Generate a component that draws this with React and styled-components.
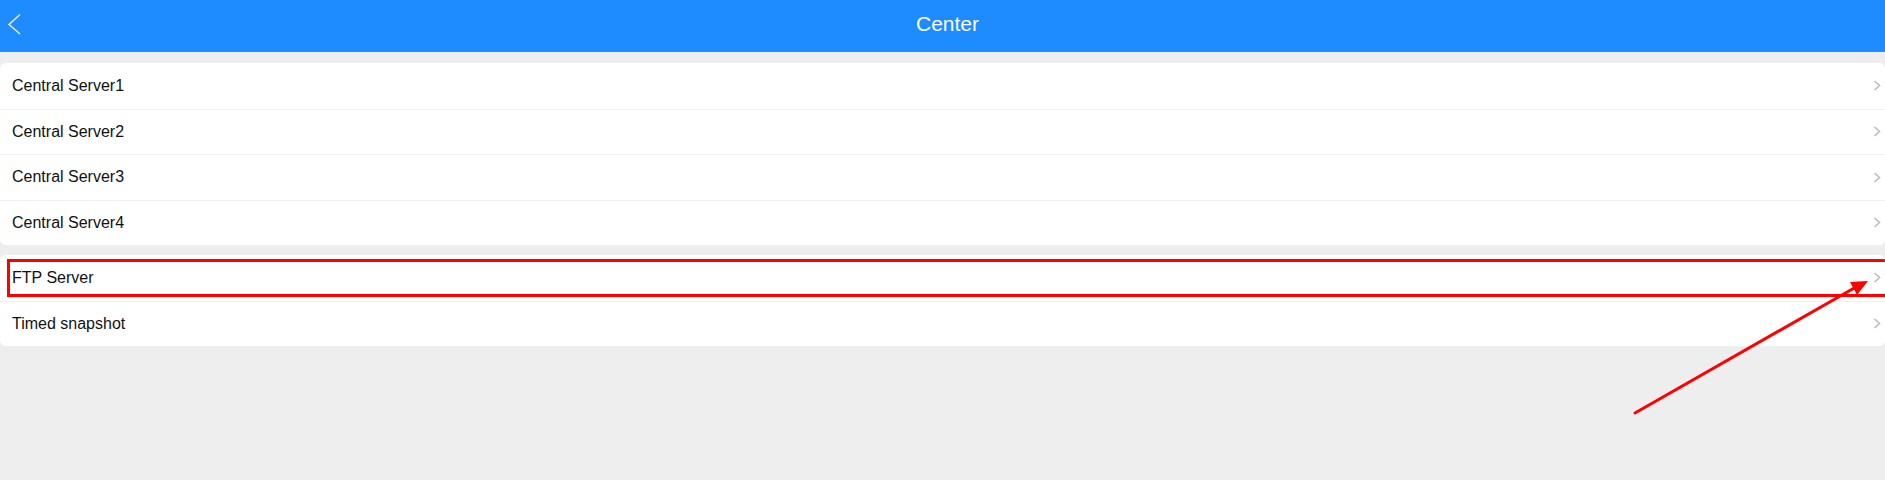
import React from 'react'
import styled, { createGlobalStyle } from 'styled-components'

const GlobalStyle = createGlobalStyle`
  html, body {
    margin: 0;
    padding: 0;
    background: #eeeeee;
    font-family: "Liberation Sans", Arial, sans-serif;
  }
`

const Page = styled.div`
  position: relative;
  width: 1885px;
  height: 480px;
  background: #eeeeee;
  overflow: hidden;
`

const Header = styled.header`
  position: relative;
  height: 52px;
  background: #1e8bff;
  display: flex;
  align-items: center;
  justify-content: center;
`

const BackButton = styled.button`
  position: absolute;
  left: 6px;
  top: 12px;
  width: 16px;
  height: 24px;
  padding: 0;
  border: 0;
  background: none;
  display: flex;
  align-items: center;
  justify-content: center;
  cursor: pointer;
`

const Title = styled.h1`
  margin: 0 0 4px 10px;
  color: #ffffff;
  font-size: 21px;
  font-weight: 400;
`

const Content = styled.main`
  display: flex;
  flex-direction: column;
  gap: 10px;
  padding-top: 11px;
`

const Card = styled.section`
  background: #ffffff;
  border-radius: 6px;
  overflow: hidden;
`

const Row = styled.div`
  position: relative;
  box-sizing: border-box;
  height: 45.5px;
  display: flex;
  align-items: center;
  justify-content: space-between;
  padding: 0 4px 0 12px;
  font-size: 16px;
  color: #111;

  & + & {
    border-top: 1px solid #f0f0f0;
  }
`

const Label = styled.span`
  line-height: 1;
`

const Chevron = styled.svg`
  width: 8px;
  height: 11px;
  flex: none;
`

const Highlight = styled.div`
  position: absolute;
  left: 7px;
  right: -10px;
  top: 4px;
  bottom: 4px;
  border: 3px solid #ff0000;
  pointer-events: none;
`

const Arrow = styled.svg`
  position: absolute;
  left: 0;
  top: 0;
  pointer-events: none;
`

const groups = [
  ['Central Server1', 'Central Server2', 'Central Server3', 'Central Server4'],
  ['FTP Server', 'Timed snapshot']
]

const RowChevron = () => (
  <Chevron viewBox="0 0 8 11">
    <path d="M1.5 1 L6.5 5.5 L1.5 10" fill="none" stroke="#bcbcbe" strokeWidth="1.6" />
  </Chevron>
)

const App = () => {
  return (
    <Page>
      <GlobalStyle />
      <Header>
        <BackButton aria-label="back">
          <svg width="14" height="22" viewBox="0 0 14 22">
            <path d="M13 1.5 L2 11.5 L13 21" fill="none" stroke="#e6f1ff" strokeWidth="1.5" />
          </svg>
        </BackButton>
        <Title>Center</Title>
      </Header>
      <Content>
        {groups.map((items, g) => (
          <Card key={g}>
            {items.map((name) => (
              <Row key={name}>
                <Label>{name}</Label>
                <RowChevron />
                {name === 'FTP Server' && <Highlight />}
              </Row>
            ))}
          </Card>
        ))}
      </Content>
      <Arrow width="1885" height="480" viewBox="0 0 1885 480">
        <line x1="1635" y1="413" x2="1856" y2="287" stroke="#ff0000" strokeWidth="3" strokeLinecap="round" />
        <polygon points="1868,281 1850,282 1857,295" fill="#ff0000" />
      </Arrow>
    </Page>
  )
}

export default App
